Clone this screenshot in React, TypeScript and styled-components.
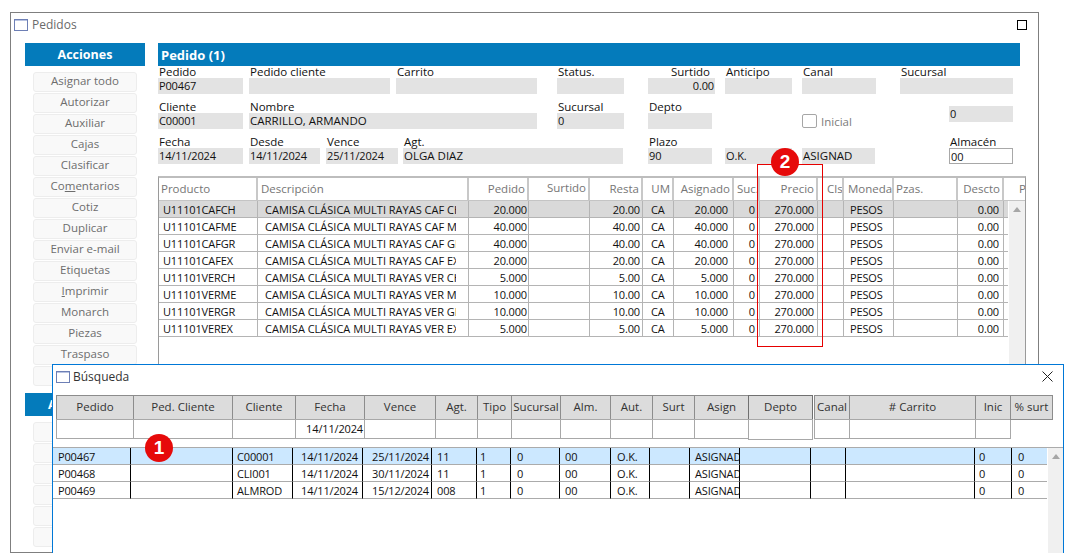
import React from "react";
import styled, { createGlobalStyle, css } from "styled-components";

const FONT = `"Open Sans", "Noto Sans", sans-serif`;

const GlobalStyle = createGlobalStyle`
  html, body {
    margin: 0;
    padding: 0;
    background: #fff;
  }
  * {
    box-sizing: border-box;
  }
`;

// digits run narrower in the original font
const dataText = css`
  font-size: 11px;
  letter-spacing: -0.15px;
`;

const ACTIONS = [
  "Asignar todo",
  "Autorizar",
  "Auxiliar",
  "Cajas",
  "Clasificar",
  "Comentarios",
  "Cotiz",
  "Duplicar",
  "Enviar e-mail",
  "Etiquetas",
  "Imprimir",
  "Monarch",
  "Piezas",
  "Traspaso",
  "",
];

const MNEMONICS: Record<string, number> = { Comentarios: 2, Imprimir: 0 };

const ORDER_COLS = "99px 211px 60px 61px 53px 31px 60px 26px 58px 26px 50px 64px 46px";

const ORDER_HEAD: { label: string; align?: "left" | "right"; pr?: number; pl?: number; dy?: number }[] = [
  { label: "Producto", pl: 2 },
  { label: "Descripción", pl: 3 },
  { label: "Pedido", align: "right", pr: 2 },
  { label: "Surtido", align: "right", pr: 2, dy: -1 },
  { label: "Resta", align: "right", pr: 2 },
  { label: "UM", align: "right", pr: 2 },
  { label: "Asignado", align: "right", pr: 2 },
  { label: "Suc.", pl: 3 },
  { label: "Precio", align: "right", pr: 2 },
  { label: "Cls", pl: 9 },
  { label: "Moneda", pl: 4 },
  { label: "Pzas.", pl: 2 },
  { label: "Descto", align: "right", pr: 2, dy: 1 },
  { label: "P", pl: 15 },
];

const ORDER_ROWS = [
  ["U11101CAFCH", "CAMISA CLÁSICA MULTI RAYAS CAF CH", "20.000", "20.00", "20.000"],
  ["U11101CAFME", "CAMISA CLÁSICA MULTI RAYAS CAF ME", "40.000", "40.00", "40.000"],
  ["U11101CAFGR", "CAMISA CLÁSICA MULTI RAYAS CAF GR", "40.000", "40.00", "40.000"],
  ["U11101CAFEX", "CAMISA CLÁSICA MULTI RAYAS CAF EX", "20.000", "20.00", "20.000"],
  ["U11101VERCH", "CAMISA CLÁSICA MULTI RAYAS VER CH", "5.000", "5.00", "5.000"],
  ["U11101VERME", "CAMISA CLÁSICA MULTI RAYAS VER ME", "10.000", "10.00", "10.000"],
  ["U11101VERGR", "CAMISA CLÁSICA MULTI RAYAS VER GR", "10.000", "10.00", "10.000"],
  ["U11101VEREX", "CAMISA CLÁSICA MULTI RAYAS VER EX", "5.000", "5.00", "5.000"],
];

const SEARCH_HEAD = [
  { label: "Pedido", w: 77 },
  { label: "Ped. Cliente", w: 99 },
  { label: "Cliente", w: 63 },
  { label: "Fecha", w: 69, value: "14/11/2024" },
  { label: "Vence", w: 71 },
  { label: "Agt.", w: 42 },
  { label: "Tipo", w: 34 },
  { label: "Sucursal", w: 49 },
  { label: "Alm.", w: 50 },
  { label: "Aut.", w: 42 },
  { label: "Surt", w: 42 },
  { label: "Asign", w: 54 },
  { label: "Depto", w: 64, tall: true },
  { label: "Canal", w: 35, gap: 2 },
  { label: "# Carrito", w: 126 },
  { label: "Inic", w: 35 },
  { label: "% surt", w: 42, noFilter: true },
];

const SEARCH_COLS: { w: number; pl: number; right?: boolean; pr?: number }[] = [
  { w: 78, pl: 5 },
  { w: 102, pl: 4 },
  { w: 60, pl: 4 },
  { w: 70, pl: 0, right: true, pr: 4 },
  { w: 69, pl: 0, right: true, pr: 2 },
  { w: 45, pl: 5 },
  { w: 34, pl: 3 },
  { w: 49, pl: 6 },
  { w: 51, pl: 5 },
  { w: 39, pl: 6 },
  { w: 40, pl: 4 },
  { w: 50, pl: 5 },
  { w: 71, pl: 4 },
  { w: 35, pl: 4 },
  { w: 129, pl: 4 },
  { w: 37, pl: 4 },
  { w: 35, pl: 6 },
];

const SEARCH_ROWS = [
  ["P00467", "", "C00001", "14/11/2024", "25/11/2024", "11", "1", "0", "00", "O.K.", "", "ASIGNADO", "", "", "", "0", "0"],
  ["P00468", "", "CLI001", "14/11/2024", "30/11/2024", "11", "1", "0", "00", "O.K.", "", "ASIGNADO", "", "", "", "0", "0"],
  ["P00469", "", "ALMROD", "14/11/2024", "15/12/2024", "008", "1", "0", "00", "O.K.", "", "ASIGNADO", "", "", "", "0", "0"],
];

function WindowIcon() {
  return (
    <svg width="14" height="12" viewBox="0 0 14 12">
      <rect x="0.5" y="0.5" width="13" height="11" fill="#fff" stroke="#6d7fb5" />
      <line x1="1" y1="1.5" x2="13" y2="1.5" stroke="#b9c4e2" />
    </svg>
  );
}

function ActionLabel({ text }: { text: string }) {
  const at = MNEMONICS[text];
  if (at === undefined) return <>{text}</>;
  return (
    <>
      {text.slice(0, at)}
      <u>{text[at]}</u>
      {text.slice(at + 1)}
    </>
  );
}

function Field(props: {
  label?: string;
  value?: string;
  w: number;
  ml?: number;
  right?: boolean;
  white?: boolean;
  caps?: boolean;
}) {
  return (
    <FieldBox $w={props.w} $ml={props.ml || 0}>
      <FieldLabel $right={props.right}>{props.label}</FieldLabel>
      <FieldValue $right={props.right} $white={props.white} $caps={props.caps}>
        {props.value}
      </FieldValue>
    </FieldBox>
  );
}

export default function App() {
  return (
    <Desktop>
      <GlobalStyle />
      <PedidosWindow>
        <TitleBar>
          <WindowIcon />
          <TitleText>Pedidos</TitleText>
          <MaxButton />
        </TitleBar>
        <WindowBody>
          <Sidebar>
            <SideHeader>Acciones</SideHeader>
            <ButtonList>
              {ACTIONS.map((a, i) => (
                <ActionButton key={i}>
                  <ActionLabel text={a} />
                </ActionButton>
              ))}
            </ButtonList>
            <SideHeader $second>
              <SecondTitle>A</SecondTitle>
            </SideHeader>
            <ButtonList>
              {[0, 1, 2, 3, 4, 5].map((i) => (
                <ActionButton key={i} />
              ))}
            </ButtonList>
          </Sidebar>
          <Main>
            <MainHeader>Pedido (1)</MainHeader>
            <FormRow>
              <Field label="Pedido" value="P00467" w={85} />
              <Field label="Pedido cliente" w={141} ml={6} />
              <Field label="Carrito" w={141} ml={6} />
              <Field label="Status." w={67} ml={20} />
              <Field label="Surtido" value="0.00" w={67} ml={24} right />
              <Field label="Anticipo" w={67} ml={10} />
              <Field label="Canal" w={74} ml={10} />
              <Field label="Sucursal" w={113} ml={24} />
            </FormRow>
            <FormRow>
              <Field label="Cliente" value="C00001" w={85} />
              <Field label="Nombre" value="CARRILLO, ARMANDO" w={288} ml={6} caps />
              <Field label="Sucursal" value="0" w={67} ml={20} />
              <Field label="Depto" w={64} ml={24} />
              <CheckWrap>
                <CheckBox />
                <CheckLabel>Inicial</CheckLabel>
              </CheckWrap>
              <LooseValue>0</LooseValue>
            </FormRow>
            <FormRow>
              <Field label="Fecha" value="14/11/2024" w={85} />
              <Field label="Desde" value="14/11/2024" w={71} ml={6} />
              <Field label="Vence" value="25/11/2024" w={72} ml={6} />
              <Field label="Agt." value="OLGA DIAZ" w={220} ml={5} caps />
              <Field label="Plazo" value="90" w={64} ml={25} />
              <Field value="O.K." w={67} ml={13} />
              <Field value="ASIGNAD" w={73} ml={10} caps />
              <Field label="Almacén" value="00" w={64} ml={74} white />
            </FormRow>
            <OrderTable>
              <OrderHead>
                {ORDER_HEAD.map((h) => (
                  <OrderTh key={h.label} $align={h.align || "left"} $pl={h.pl || 0} $pr={h.pr || 0} $dy={h.dy || 0}>
                    {h.label}
                  </OrderTh>
                ))}
              </OrderHead>
              <OrderBody>
                <OrderRows>
                  {ORDER_ROWS.map((r, i) => (
                    <OrderRow key={r[0]} $selected={i === 0}>
                      <OrderTd $pl={4}>{r[0]}</OrderTd>
                      <OrderTd $pl={7}>
                        <Clipped>{r[1]}</Clipped>
                      </OrderTd>
                      <OrderTd $right $pr={1}>{r[2]}</OrderTd>
                      <OrderTd />
                      <OrderTd $right $pr={2}>{r[3]}</OrderTd>
                      <OrderTd $pl={8}>CA</OrderTd>
                      <OrderTd $right $pr={5}>{r[4]}</OrderTd>
                      <OrderTd $right $pr={4}>0</OrderTd>
                      <OrderTd $right $pr={3}>270.000</OrderTd>
                      <OrderTd />
                      <OrderTd $pl={6}>PESOS</OrderTd>
                      <OrderTd />
                      <OrderTd $right $pr={4}>0.00</OrderTd>
                      <OrderTd />
                    </OrderRow>
                  ))}
                </OrderRows>
                <ScrollBar $w={17}>
                  <ScrollArrow />
                </ScrollBar>
              </OrderBody>
            </OrderTable>
          </Main>
        </WindowBody>
      </PedidosWindow>

      <SearchWindow>
        <TitleBar $search>
          <WindowIcon />
          <SearchTitle>Búsqueda</SearchTitle>
          <CloseButton>
            <svg width="11" height="11" viewBox="0 0 11 11">
              <path d="M0.5 0.5 L10.5 10.5 M10.5 0.5 L0.5 10.5" stroke="#222" strokeWidth="1" fill="none" />
            </svg>
          </CloseButton>
        </TitleBar>
        <SearchHead>
          {SEARCH_HEAD.map((c) => (
            <SearchColumn key={c.label} $w={c.w} $gap={c.gap || 0}>
              <SearchTh $dark={c.tall}>{c.label}</SearchTh>
              {!c.noFilter && <SearchFilter $tall={c.tall}>{c.value}</SearchFilter>}
            </SearchColumn>
          ))}
        </SearchHead>
        <Results>
          <ResultRows>
            {SEARCH_ROWS.map((r, i) => (
              <ResultRow key={r[0]} $selected={i === 0}>
                {r.map((v, j) => {
                  const c = SEARCH_COLS[j];
                  return (
                    <ResultTd key={j} $w={c.w} $pl={c.pl} $pr={c.pr || 0} $right={c.right} $last={j === r.length - 1}>
                      {v}
                    </ResultTd>
                  );
                })}
              </ResultRow>
            ))}
          </ResultRows>
          <ScrollBar $w={15}>
            <ScrollArrow />
          </ScrollBar>
        </Results>
      </SearchWindow>

      <PriceMark />
      <Badge $x={771} $y={148}>2</Badge>
      <Badge $x={145} $y={434}>1</Badge>
    </Desktop>
  );
}

const Desktop = styled.div`
  position: relative;
  width: 1074px;
  height: 560px;
  overflow: hidden;
  background: #fff;
  font-family: ${FONT};
  font-size: 11.5px;
  color: #111;
`;

const PedidosWindow = styled.div`
  position: absolute;
  left: 10px;
  top: 12px;
  width: 1029px;
  height: 541px;
  border: 1px solid #7f7f7f;
  background: #fff;
  overflow: hidden;
`;

const TitleBar = styled.div<{ $search?: boolean }>`
  display: flex;
  align-items: center;
  height: 30px;
  padding-left: 3px;
  padding-bottom: ${(p) => (p.$search ? "7px" : "6px")};
`;

const TitleText = styled.span`
  margin-left: 4px;
  color: #6a6a6a;
  font-size: 12px;
  line-height: 12px;
`;

const SearchTitle = styled.span`
  margin-left: 3px;
  color: #333;
  font-size: 12px;
  line-height: 12px;
`;

const MaxButton = styled.div`
  width: 10px;
  height: 10px;
  margin-left: auto;
  margin-right: 11px;
  border: 1px solid #000;
`;

const CloseButton = styled.div`
  display: flex;
  margin-left: auto;
  margin-right: 10px;
`;

const WindowBody = styled.div`
  display: flex;
  gap: 13px;
  padding-left: 14px;
`;

const Sidebar = styled.div`
  width: 120px;
  flex-shrink: 0;
`;

const SideHeader = styled.div<{ $second?: boolean }>`
  display: flex;
  align-items: center;
  justify-content: ${(p) => (p.$second ? "flex-start" : "center")};
  height: 23px;
  padding-bottom: 1px;
  margin-top: ${(p) => (p.$second ? "7px" : "0")};
  background: #047bbb;
  color: #fff;
  font-weight: 700;
  font-size: 12.5px;
`;

const SecondTitle = styled.span`
  margin-left: 23px;
`;

const ButtonList = styled.div`
  display: flex;
  flex-direction: column;
  gap: 1px;
  padding: 6px 8px 0 8px;
`;

const ActionButton = styled.div`
  display: flex;
  align-items: center;
  justify-content: center;
  height: 20px;
  padding-bottom: 3px;
  background: #f9f9f9;
  border: 1px solid #ededed;
  border-radius: 3px;
  color: #6d6d6d;
  font-size: 11.5px;
`;

const Main = styled.div`
  width: 862px;
  flex-shrink: 0;
`;

const MainHeader = styled.div`
  display: flex;
  align-items: center;
  height: 23px;
  padding-left: 3px;
  background: #047bbb;
  color: #fff;
  font-weight: 700;
  font-size: 13px;
`;

const FormRow = styled.div`
  display: flex;
  height: 28px;
  margin-bottom: 7px;
`;

const FieldBox = styled.div<{ $w: number; $ml: number }>`
  width: ${(p) => p.$w}px;
  margin-left: ${(p) => p.$ml}px;
  flex-shrink: 0;
`;

const FieldLabel = styled.div<{ $right?: boolean }>`
  height: 12px;
  line-height: 11px;
  padding: ${(p) => (p.$right ? "0 5px 0 0" : "0 0 0 1px")};
  text-align: ${(p) => (p.$right ? "right" : "left")};
  white-space: nowrap;
`;

const FieldValue = styled.div<{ $right?: boolean; $white?: boolean; $caps?: boolean }>`
  ${(p) => (p.$caps ? "font-size: 11.5px;" : dataText)}
  height: 16px;
  line-height: 15px;
  padding: 0 1px;
  text-align: ${(p) => (p.$right ? "right" : "left")};
  background: ${(p) => (p.$white ? "#fff" : "#e3e3e3")};
  border: ${(p) => (p.$white ? "1px solid #a8a8a8" : "none")};
  white-space: nowrap;
`;

const CheckWrap = styled.div`
  display: flex;
  align-items: center;
  gap: 4px;
  width: 147px;
  height: 14px;
  margin: 13px 0 0 90px;
  flex-shrink: 0;
`;

const CheckBox = styled.div`
  width: 15px;
  height: 14px;
  border: 1px solid #a6a6a6;
  border-radius: 2px;
  background: #fff;
`;

const CheckLabel = styled.span`
  color: #7c7c7c;
  padding-top: 1px;
`;

const LooseValue = styled.div`
  ${dataText}
  width: 64px;
  height: 16px;
  margin-top: 5px;
  padding: 0 1px;
  line-height: 15px;
  background: #e3e3e3;
  flex-shrink: 0;
`;

const OrderTable = styled.div`
  width: 868px;
  height: 210px;
  margin-top: 12px;
  border: 1px solid #9a9a9a;
  border-bottom: none;
  border-top: 2px solid #bdbdbd;
`;

const OrderHead = styled.div`
  display: grid;
  grid-template-columns: ${ORDER_COLS} 1fr;
  height: 23px;
  border-bottom: 1px solid #c4c4c4;
`;

const OrderTh = styled.div<{ $align: string; $pl: number; $pr: number; $dy: number }>`
  display: flex;
  align-items: center;
  justify-content: ${(p) => (p.$align === "right" ? "flex-end" : "flex-start")};
  padding: ${(p) => Math.max(p.$dy, 0)}px ${(p) => p.$pr}px ${(p) => 2 + Math.max(-p.$dy, 0)}px ${(p) => p.$pl}px;
  border-right: 2px solid #c8c8c8;
  color: #767676;
  overflow: hidden;
  white-space: nowrap;
  &:last-child {
    border-right: none;
  }
`;

const OrderBody = styled.div`
  display: flex;
  height: 190px;
`;

const OrderRows = styled.div`
  width: 849px;
  flex-shrink: 0;
`;

const OrderRow = styled.div<{ $selected?: boolean }>`
  display: grid;
  grid-template-columns: ${ORDER_COLS} 1fr;
  height: 17px;
  background: ${(p) => (p.$selected ? "#d9d9d9" : "#fff")};
`;

const OrderTd = styled.div<{ $pl?: number; $pr?: number; $right?: boolean }>`
  ${dataText}
  padding: 0 ${(p) => p.$pr || 0}px 0 ${(p) => p.$pl || 0}px;
  line-height: 18px;
  text-align: ${(p) => (p.$right ? "right" : "left")};
  border-right: 1px solid #b4b4b4;
  border-bottom: 1px solid #b4b4b4;
  white-space: nowrap;
  overflow: hidden;
  &:last-child {
    border-right: none;
  }
`;

const Clipped = styled.div`
  width: 191px;
  overflow: hidden;
  letter-spacing: 0;
`;

const ScrollBar = styled.div<{ $w: number }>`
  width: ${(p) => p.$w}px;
  margin-left: 1px;
  padding-top: 6px;
  background: #f0f0f0;
  display: flex;
  justify-content: center;
`;

const ScrollArrow = styled.div`
  width: 0;
  height: 0;
  border-left: 4px solid transparent;
  border-right: 4px solid transparent;
  border-bottom: 5px solid #a6a6a6;
`;

const SearchWindow = styled.div`
  position: absolute;
  left: 52px;
  top: 364px;
  width: 1012px;
  height: 189px;
  border: 1px solid #0078d7;
  border-bottom: none;
  background: #fff;
  display: flex;
  flex-direction: column;
`;

const SearchHead = styled.div`
  display: flex;
  padding-left: 3px;
  height: 44px;
`;

const SearchColumn = styled.div<{ $w: number; $gap: number }>`
  width: ${(p) => p.$w + 1}px;
  margin-right: -1px;
  margin-left: ${(p) => p.$gap}px;
  flex-shrink: 0;
`;

const SearchTh = styled.div<{ $dark?: boolean }>`
  display: flex;
  align-items: center;
  justify-content: center;
  height: 25px;
  padding-bottom: 2px;
  background: #dcdcdc;
  border: ${(p) => (p.$dark ? "1px solid #707070" : "1px solid #8c8c8c")};
  color: #333;
  white-space: nowrap;
  overflow: hidden;
`;

const SearchFilter = styled.div<{ $tall?: boolean }>`
  ${dataText}
  height: ${(p) => (p.$tall ? "21px" : "20px")};
  margin-top: -1px;
  padding-right: 1px;
  border: 1px solid #a8a8a8;
  line-height: 18px;
  text-align: right;
  white-space: nowrap;
`;

const Results = styled.div`
  display: flex;
  flex: 1;
  margin-top: 8px;
  border-top: 1px solid #ababab;
`;

const ResultRows = styled.div`
  width: 994px;
  flex-shrink: 0;
`;

const ResultRow = styled.div<{ $selected?: boolean }>`
  display: flex;
  height: 17px;
  background: ${(p) => (p.$selected ? "#cce8ff" : "#fff")};
`;

const ResultTd = styled.div<{ $w: number; $pl: number; $pr: number; $right?: boolean; $last?: boolean }>`
  ${dataText}
  width: ${(p) => p.$w}px;
  padding: 0 ${(p) => p.$pr}px 0 ${(p) => p.$pl}px;
  line-height: 18px;
  text-align: ${(p) => (p.$right ? "right" : "left")};
  border-right: ${(p) => (p.$last ? "none" : "1px solid #000")};
  border-bottom: 1px solid #ababab;
  white-space: nowrap;
  overflow: hidden;
  flex-shrink: 0;
`;

const PriceMark = styled.div`
  position: absolute;
  left: 757px;
  top: 164px;
  width: 66px;
  height: 183px;
  border: 1px solid #e60000;
`;

const Badge = styled.div<{ $x: number; $y: number }>`
  position: absolute;
  left: ${(p) => p.$x}px;
  top: ${(p) => p.$y}px;
  width: 28px;
  height: 28px;
  border-radius: 50%;
  background: #e60a0a;
  color: #fff;
  font-family: "Liberation Sans", sans-serif;
  font-weight: 700;
  font-size: 19px;
  line-height: 28px;
  text-align: center;
`;
